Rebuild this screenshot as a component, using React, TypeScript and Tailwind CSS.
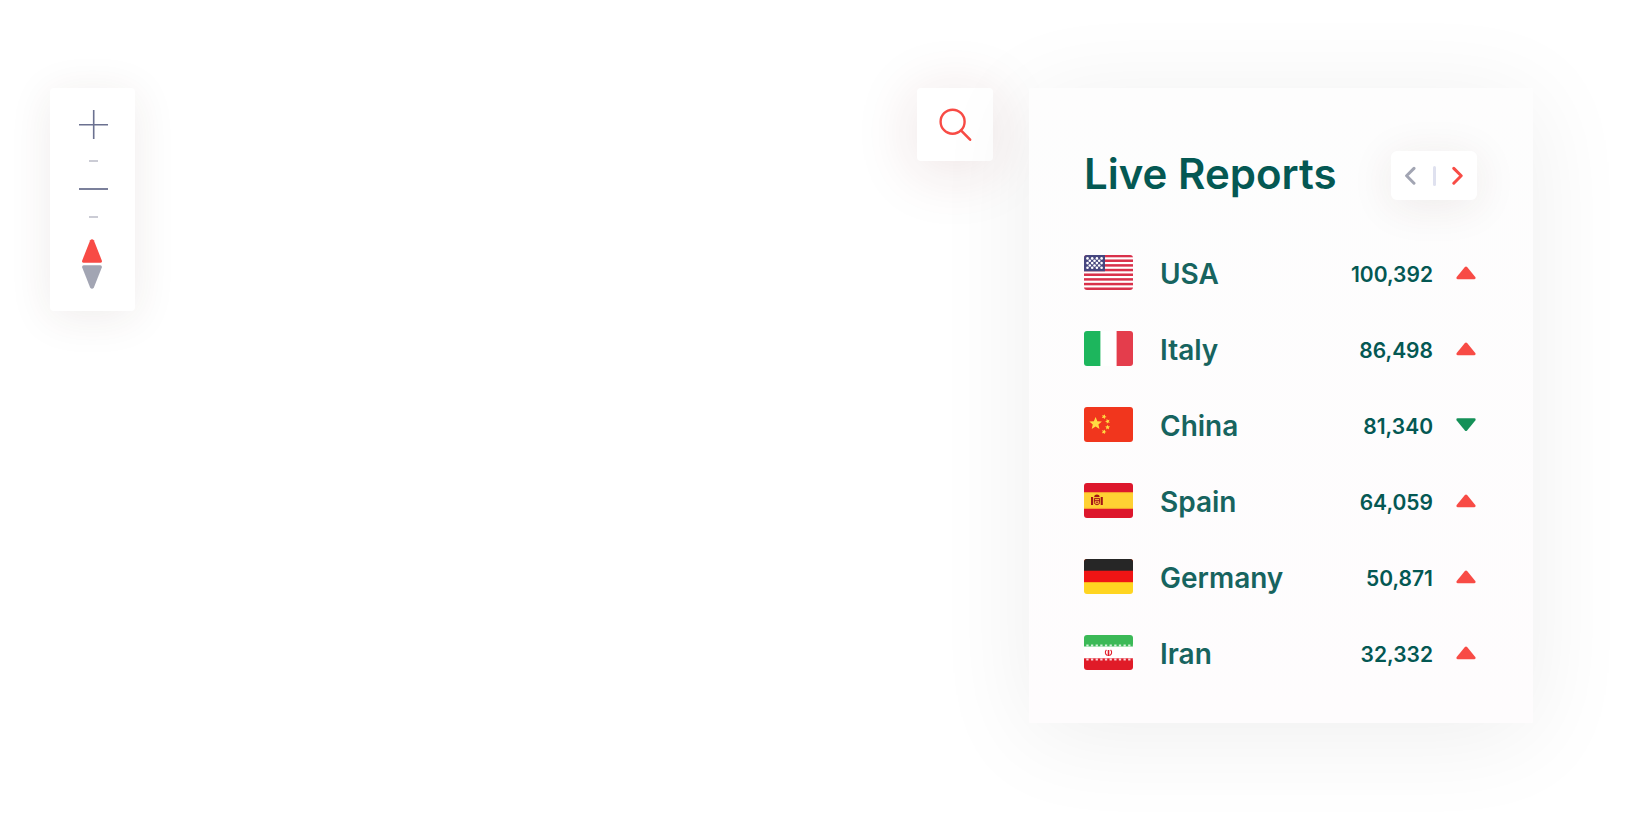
import type { ReactNode } from "react";

type Trend = "up" | "down";

interface Report {
  country: string;
  cases: string;
  trend: Trend;
  flag: ReactNode;
}

function Flag({ children }: { children: ReactNode }) {
  return (
    <svg viewBox="0 0 49 35" className="block h-[35px] w-[49px] rounded-[3px]" aria-hidden="true">
      {children}
    </svg>
  );
}

function starPoints(cx: number, cy: number, r: number, turn = 0) {
  return Array.from({ length: 10 }, (_, i) => {
    const radius = i % 2 === 0 ? r : r * 0.45;
    const a = -Math.PI / 2 + turn + (i * Math.PI) / 5;
    return `${(cx + radius * Math.cos(a)).toFixed(2)},${(cy + radius * Math.sin(a)).toFixed(2)}`;
  }).join(" ");
}

const usa = (
  <Flag>
    <rect width="49" height="35" fill="#fff" />
    {[0, 1, 2, 3, 4, 5, 6, 7].map((i) => (
      <rect key={i} y={i * 4.67 - 0.2} width="49" height="2.5" fill="#d9304a" />
    ))}
    <rect width="21" height="16.3" fill="#46467f" />
    {[0, 1, 2, 3, 4].flatMap((row) =>
      (row % 2 === 0 ? [3.5, 8.2, 12.9, 17.6] : [5.8, 10.5, 15.2]).map((x) => (
        <circle key={`${row}-${x}`} cx={x} cy={3.4 + row * 2.35} r="1.3" fill="#fff" />
      )),
    )}
  </Flag>
);

const italy = (
  <Flag>
    <rect width="49" height="35" fill="#fff" />
    <rect width="16.4" height="35" fill="#1db65d" />
    <rect x="32.6" width="16.4" height="35" fill="#e43d4c" />
  </Flag>
);

const china = (
  <Flag>
    <rect width="49" height="35" fill="#f1361d" />
    <polygon points={starPoints(11.6, 16.6, 6.6)} fill="#ffdc42" />
    <polygon points={starPoints(20, 9.7, 2.6, 0.4)} fill="#ffdc42" />
    <polygon points={starPoints(23.6, 14.3, 2.6, 0.9)} fill="#ffdc42" />
    <polygon points={starPoints(23.6, 20.3, 2.6)} fill="#ffdc42" />
    <polygon points={starPoints(20, 24.8, 2.6, 0.4)} fill="#ffdc42" />
  </Flag>
);

const spain = (
  <Flag>
    <rect width="49" height="35" fill="#dd172c" />
    <rect y="9.3" width="49" height="16.4" fill="#ffd133" />
    <path d="M0 9.6h49M0 25.4h49" stroke="#f5a02f" strokeWidth=".8" />
    <g fill="#a41517">
      <rect x="7" y="14" width="2.1" height="8" />
      <rect x="16.7" y="14" width="2.1" height="8" />
      <path d="M10.2 13.9c0-3.2 5.4-3.2 5.4 0z" />
    </g>
    <path d="M10.4 15.4h5.2v4c0 3-5.2 3-5.2 0z" fill="#f2a43a" stroke="#a41517" strokeWidth="1" />
    <path d="M10.6 17.6h4.8M12 19.3h2" stroke="#a41517" strokeWidth=".9" />
  </Flag>
);

const germany = (
  <Flag>
    <rect width="49" height="35" fill="#ffd521" />
    <rect width="49" height="23.2" fill="#f01515" />
    <rect width="49" height="11.7" fill="#262626" />
  </Flag>
);

const iran = (
  <Flag>
    <rect width="49" height="35" fill="#fff" />
    <rect width="49" height="11.5" fill="#3bb957" />
    <rect y="23.3" width="49" height="11.7" fill="#e01b28" />
    <path d="M2.3 10.5H49" stroke="#d7f1dd" strokeWidth="1.8" strokeDasharray="2.3 2.35" />
    <path d="M2.3 24.5H49" stroke="#fad7da" strokeWidth="1.8" strokeDasharray="2.3 2.35" />
    <path
      d="M22.4 14.9c-1.8 2-1.2 4.6 1.2 5.7M26.6 14.9c1.8 2 1.2 4.6-1.2 5.7"
      fill="none"
      stroke="#e01b28"
      strokeWidth="1.1"
    />
    <path d="M24.5 15v6" stroke="#e01b28" strokeWidth="1.6" />
  </Flag>
);

const reports: Report[] = [
  { country: "USA", cases: "100,392", trend: "up", flag: usa },
  { country: "Italy", cases: "86,498", trend: "up", flag: italy },
  { country: "China", cases: "81,340", trend: "down", flag: china },
  { country: "Spain", cases: "64,059", trend: "up", flag: spain },
  { country: "Germany", cases: "50,871", trend: "up", flag: germany },
  { country: "Iran", cases: "32,332", trend: "up", flag: iran },
];

function TrendIcon({ trend }: { trend: Trend }) {
  return (
    <svg
      viewBox="0 0 20 14"
      className="ml-auto block h-[14px] w-5"
      role="img"
      aria-label={trend === "up" ? "Rising" : "Falling"}
    >
      {trend === "up" ? (
        <path d="M8.9 .9Q10 0 11.1 .9L19.3 10.9Q20.3 13 18.4 13.2H1.6Q-.3 13 .7 10.9z" fill="#f84b45" />
      ) : (
        <path d="M8.9 12.6Q10 13.6 11.1 12.6L19.3 2.6Q20.3 .4 18.4 .2H1.6Q-.3 .4 .7 2.6z" fill="#159058" />
      )}
    </svg>
  );
}

function MapControls() {
  return (
    <div
      role="group"
      aria-label="Map controls"
      className="flex w-[85px] shrink-0 flex-col items-center gap-[21px] rounded-[4px] bg-white pt-[22px] pr-px pb-[22px] shadow-[0_6px_44px_rgba(80,40,30,0.09)]"
    >
      <button type="button" aria-label="Zoom in" className="ml-[3px]">
        <svg viewBox="0 0 29 29" className="block size-[29px]">
          <path d="M14.7 0v29M0 14.7h29" stroke="#6b7190" strokeWidth="1.6" />
        </svg>
      </button>
      <span className="ml-[3px] h-0.5 w-[9px] bg-[#cbccd5]" />
      <button type="button" aria-label="Zoom out" className="ml-[3px]">
        <svg viewBox="0 0 29 12" className="block h-3 w-[29px]">
          <path d="M0 6h29" stroke="#7b809b" strokeWidth="2" />
        </svg>
      </button>
      <span className="ml-[3px] h-0.5 w-[9px] bg-[#cbccd5]" />
      <button type="button" aria-label="Reset bearing">
        <svg viewBox="0 0 20 50" className="block h-[50px] w-5">
          <path d="M8.2 1.3Q10 -1 11.8 1.3L19.8 21.4Q20.2 23.6 18.4 23.8H1.6Q-.2 23.6 .2 21.4z" fill="#f84b45" />
          <path d="M8.2 48.7Q10 51 11.8 48.7L19.8 28.6Q20.2 26.4 18.4 26.2H1.6Q-.2 26.4 .2 28.6z" fill="#a2a5b3" />
        </svg>
      </button>
    </div>
  );
}

function LiveReports() {
  return (
    <section
      aria-labelledby="live-reports"
      className="w-[504px] shrink-0 rounded-[2px] bg-linear-to-b from-[#fdfdfd] to-[#fefcfd] pt-[63px] pr-14 pb-[33px] pl-[55px] shadow-[0_12px_100px_rgba(0,0,0,0.07)]"
    >
      <header className="flex items-start justify-between">
        <h2 id="live-reports" className="text-[42px] leading-[46px] font-semibold whitespace-nowrap text-[#045853]">
          Live Reports
        </h2>
        <div className="flex h-[49px] w-[86px] items-center justify-between rounded-[6px] bg-white px-[13px] shadow-[0_6px_44px_rgba(80,40,30,0.09)]">
          <button type="button" aria-label="Previous page">
            <svg viewBox="0 0 12 20" className="block h-5 w-3" fill="none">
              <path d="M10 2.4L2.6 9.8l7.4 7.4" stroke="#a2a5b3" strokeWidth="3" strokeLinecap="round" strokeLinejoin="round" />
            </svg>
          </button>
          <span className="h-5 w-[3px] rounded-full bg-[#dfe1ef]" />
          <button type="button" aria-label="Next page">
            <svg viewBox="0 0 12 20" className="block h-5 w-3" fill="none">
              <path d="M1.8 2.4L9.2 9.8l-7.4 7.4" stroke="#f84b45" strokeWidth="3" strokeLinecap="round" strokeLinejoin="round" />
            </svg>
          </button>
        </div>
      </header>
      <table className="mt-[34px] w-full border-collapse">
        <tbody>
          {reports.map((r) => (
            <tr key={r.country} className="h-[76px]">
              <td className="w-[76px] p-0">{r.flag}</td>
              <th scope="row" className="p-0 pt-1 text-left text-[28px] leading-9 font-semibold text-[#17645f]">
                {r.country}
              </th>
              <td className="p-0 pt-1.5 text-right text-[21px] leading-9 font-semibold text-[#045853]">{r.cases}</td>
              <td className="w-[44px] p-0 pt-0.5 pr-px">
                <TrendIcon trend={r.trend} />
              </td>
            </tr>
          ))}
        </tbody>
      </table>
    </section>
  );
}

export default function App() {
  return (
    <main className="flex min-h-screen items-start bg-white pt-[88px] pr-[95px] pb-[88px] pl-[50px] font-['Inter',sans-serif]">
      <MapControls />
      <button
        type="button"
        aria-label="Search"
        className="mr-9 ml-auto flex h-[73px] w-[76px] shrink-0 items-center justify-center rounded-[4px] bg-white shadow-[0_8px_64px_rgba(110,30,30,0.14)]"
      >
        <svg viewBox="0 0 34 34" className="block size-[34px]" fill="none" stroke="#f84b45">
          <circle cx="14.6" cy="13.7" r="12" strokeWidth="2.4" />
          <path d="M23.2 22.6l8.9 9.1" strokeWidth="2.6" strokeLinecap="round" />
        </svg>
      </button>
      <LiveReports />
    </main>
  );
}
